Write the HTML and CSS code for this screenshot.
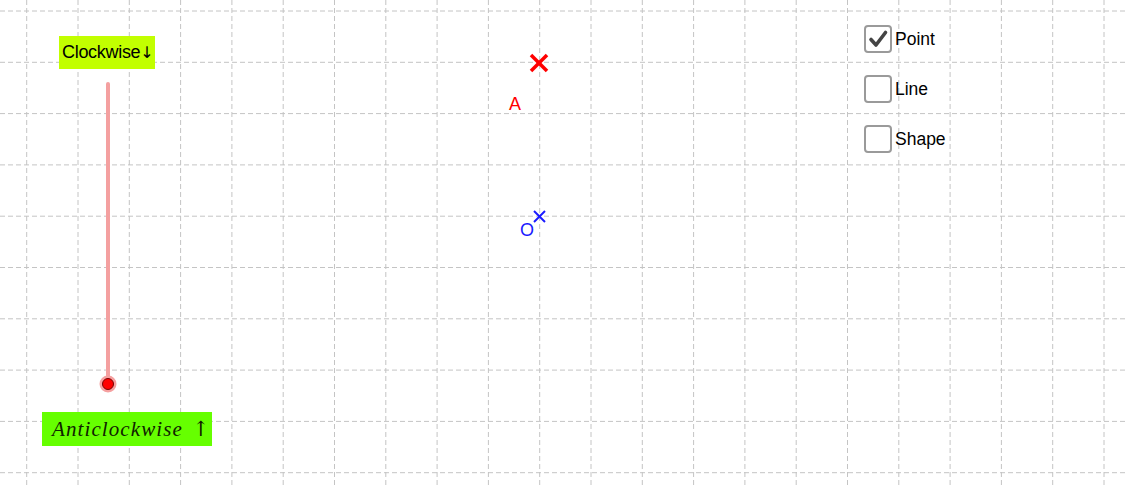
FILE: index.html
```html
<!DOCTYPE html>
<html>
<head>
<meta charset="utf-8">
<link rel="stylesheet" href="styles.css">
</head>
<body>
<div class="canvas">
  <svg class="grid" width="1125" height="485" viewBox="0 0 1125 485">
    <g class="gridlines">
      <line x1="26.7" y1="0" x2="26.7" y2="485"/>
      <line x1="78" y1="0" x2="78" y2="485"/>
      <line x1="129.3" y1="0" x2="129.3" y2="485"/>
      <line x1="180.6" y1="0" x2="180.6" y2="485"/>
      <line x1="231.9" y1="0" x2="231.9" y2="485"/>
      <line x1="283.2" y1="0" x2="283.2" y2="485"/>
      <line x1="334.5" y1="0" x2="334.5" y2="485"/>
      <line x1="385.8" y1="0" x2="385.8" y2="485"/>
      <line x1="437.1" y1="0" x2="437.1" y2="485"/>
      <line x1="488.4" y1="0" x2="488.4" y2="485"/>
      <line x1="539.7" y1="0" x2="539.7" y2="485"/>
      <line x1="591" y1="0" x2="591" y2="485"/>
      <line x1="642.3" y1="0" x2="642.3" y2="485"/>
      <line x1="693.6" y1="0" x2="693.6" y2="485"/>
      <line x1="744.9" y1="0" x2="744.9" y2="485"/>
      <line x1="796.2" y1="0" x2="796.2" y2="485"/>
      <line x1="847.5" y1="0" x2="847.5" y2="485"/>
      <line x1="898.8" y1="0" x2="898.8" y2="485"/>
      <line x1="950.1" y1="0" x2="950.1" y2="485"/>
      <line x1="1001.4" y1="0" x2="1001.4" y2="485"/>
      <line x1="1052.7" y1="0" x2="1052.7" y2="485"/>
      <line x1="1104" y1="0" x2="1104" y2="485"/>
      <line x1="0" y1="11" x2="1125" y2="11"/>
      <line x1="0" y1="62.3" x2="1125" y2="62.3"/>
      <line x1="0" y1="113.6" x2="1125" y2="113.6"/>
      <line x1="0" y1="164.9" x2="1125" y2="164.9"/>
      <line x1="0" y1="216.2" x2="1125" y2="216.2"/>
      <line x1="0" y1="267.5" x2="1125" y2="267.5"/>
      <line x1="0" y1="318.8" x2="1125" y2="318.8"/>
      <line x1="0" y1="370.1" x2="1125" y2="370.1"/>
      <line x1="0" y1="421.4" x2="1125" y2="421.4"/>
      <line x1="0" y1="472.7" x2="1125" y2="472.7"/>
    </g>
    <line class="slider" x1="108" y1="84" x2="108" y2="384"/>
    <circle class="halo" cx="108" cy="384" r="8.5"/>
    <circle class="knob" cx="108" cy="384" r="5.5"/>
    <g class="cross-red">
      <line x1="531" y1="55" x2="547" y2="71"/>
      <line x1="547" y1="55" x2="531" y2="71"/>
    </g>
    <g class="cross-blue">
      <line x1="534" y1="211" x2="545" y2="222"/>
      <line x1="545" y1="211" x2="534" y2="222"/>
    </g>
  </svg>

  <div class="label label-a">A</div>
  <div class="label label-o">O</div>

  <div class="btn clockwise">Clockwise<span class="darr">↓</span></div>
  <div class="btn anticlockwise"><span class="math">Anticlockwise</span><span class="arrow">↑</span></div>

  <div class="checks">
    <div class="check">
      <span class="box checked">
        <svg width="22" height="22" viewBox="0 0 22 22"><path d="M4 11.5 L9 17 L18.5 4.5" fill="none" stroke="#444" stroke-width="3.6" stroke-linecap="round" stroke-linejoin="round"/></svg>
      </span>
      <span class="ctext">Point</span>
    </div>
    <div class="check">
      <span class="box"></span>
      <span class="ctext">Line</span>
    </div>
    <div class="check">
      <span class="box"></span>
      <span class="ctext">Shape</span>
    </div>
  </div>
</div>
</body>
</html>
```

FILE: styles.css
```css
html, body {
  margin: 0;
  padding: 0;
  background: #ffffff;
}

.canvas {
  position: relative;
  width: 1125px;
  height: 485px;
  overflow: hidden;
  font-family: "Liberation Sans", Arial, sans-serif;
}

.grid {
  position: absolute;
  left: 0;
  top: 0;
}

.gridlines line {
  stroke: #c4c4c4;
  stroke-width: 1;
  stroke-dasharray: 5 3;
}

.slider {
  stroke: #f4a0a0;
  stroke-width: 4;
  stroke-linecap: round;
}

.halo {
  fill: #f5a0a0;
}

.knob {
  fill: #ff0000;
  stroke: #7a0000;
  stroke-width: 1;
}

.cross-red line {
  stroke: #ff0000;
  stroke-width: 3.6;
}

.cross-blue line {
  stroke: #1a1aff;
  stroke-width: 2;
}

.label {
  position: absolute;
  font-size: 18px;
  line-height: 18px;
}

.label-a {
  left: 509px;
  top: 95px;
  color: #ff0000;
}

.label-o {
  left: 520px;
  top: 221px;
  color: #1a1aff;
}

.btn {
  position: absolute;
  display: flex;
  align-items: center;
  box-sizing: border-box;
}

.clockwise {
  left: 59px;
  top: 36px;
  width: 96px;
  height: 33px;
  padding-left: 3px;
  background: #c2ff00;
  color: #000;
  font-size: 18px;
  letter-spacing: -0.3px;
}

.darr {
  font-family: "DejaVu Sans", sans-serif;
  font-size: 16px;
  letter-spacing: 0;
  margin-left: 0;
}

.anticlockwise {
  left: 42px;
  top: 412px;
  width: 170px;
  height: 34px;
  padding-left: 10px;
  background: #66ff00;
  color: #102200;
  font-family: "Liberation Serif", "Times New Roman", serif;
  font-size: 21px;
}

.math {
  font-style: italic;
  letter-spacing: 1.1px;
}

.arrow {
  margin-left: 9px;
  font-family: "DejaVu Serif", serif;
  font-size: 21px;
}

.checks {
  position: absolute;
  left: 864px;
  top: 25px;
  display: flex;
  flex-direction: column;
  gap: 22px;
}

.check {
  display: flex;
  align-items: center;
  height: 28px;
  gap: 3px;
}

.box {
  width: 24px;
  height: 24px;
  border: 2px solid #9a9a9a;
  border-radius: 4px;
  background: #fff;
  display: flex;
  align-items: center;
  justify-content: center;
}

.ctext {
  font-size: 17.5px;
  color: #000;
  margin-top: 1px;
}
```
